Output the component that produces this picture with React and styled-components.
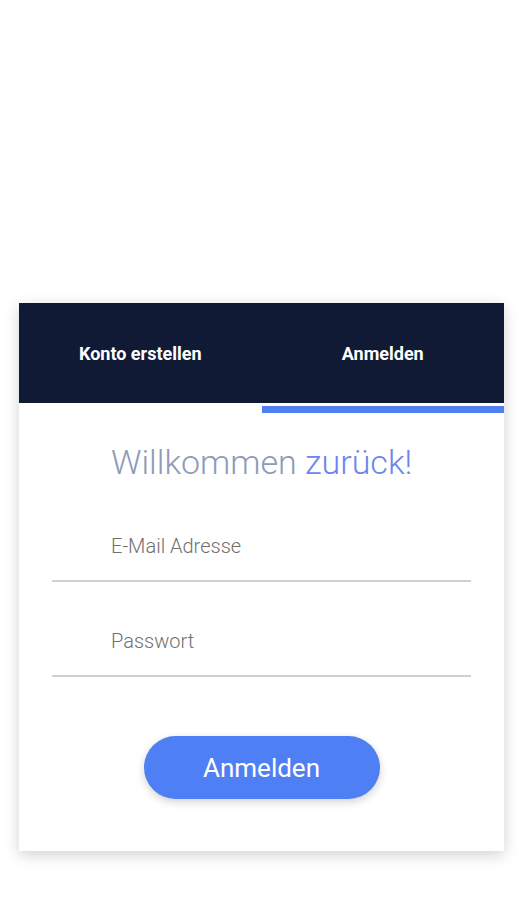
import styled, { createGlobalStyle } from "styled-components";

const GlobalStyle = createGlobalStyle`
  * { box-sizing: border-box; }
  body {
    margin: 0;
    background: #ffffff;
    font-family: Roboto, "Liberation Sans", sans-serif;
  }
`;

const Page = styled.div`
  width: 524px;
  height: 900px;
  padding: 303px 20px 0 19px;
`;

const Card = styled.section`
  width: 485px;
  height: 548px;
  background: #fff;
  box-shadow: 0 4px 14px rgba(0, 0, 0, 0.18);
  display: flex;
  flex-direction: column;
`;

const TabBar = styled.nav`
  height: 100px;
  background: #111a35;
  display: flex;
`;

const Tab = styled.button`
  flex: 1;
  background: none;
  border: none;
  color: #fff;
  font-family: Roboto, "Liberation Sans", sans-serif;
  font-size: 18px;
  font-weight: 700;
  cursor: pointer;
  padding: 0;
`;

const IndicatorTrack = styled.div`
  height: 10px;
  padding-top: 3px;
  display: flex;
  justify-content: flex-end;
`;

const Indicator = styled.div`
  width: 50%;
  height: 7px;
  background: #4f7ff0;
`;

const Form = styled.form`
  display: flex;
  flex-direction: column;
  padding: 29px 33px 0;
`;

const Title = styled.h1`
  margin: 0 0 0 59px;
  font-size: 34px;
  font-weight: 300;
  line-height: 40px;
  color: #8d9bb8;
`;

const Accent = styled.span`
  color: #6b86ef;
`;

const Field = styled.input`
  width: 100%;
  height: 57px;
  border: none;
  border-bottom: 2px solid #cfcfcf;
  padding: 0 0 13px 59px;
  font-family: Roboto, "Liberation Sans", sans-serif;
  font-size: 20px;
  font-weight: 300;
  color: #333;
  outline: none;
  background: transparent;
  margin-top: ${(p) => p.$gap}px;

  &::placeholder {
    color: #707070;
  }
`;

const Submit = styled.button`
  align-self: center;
  margin-top: 59px;
  width: 236px;
  height: 63px;
  border: none;
  border-radius: 32px;
  background: #4f7ff5;
  color: #fff;
  font-family: Roboto, "Liberation Sans", sans-serif;
  font-size: 26px;
  font-weight: 400;
  box-shadow: 0 3px 8px rgba(0, 0, 0, 0.18);
  cursor: pointer;
`;

export default function App() {
  return (
    <>
      <GlobalStyle />
      <Page>
        <Card>
          <TabBar>
            <Tab type="button">Konto erstellen</Tab>
            <Tab type="button">Anmelden</Tab>
          </TabBar>
          <IndicatorTrack>
            <Indicator />
          </IndicatorTrack>
          <Form onSubmit={(e) => e.preventDefault()}>
            <Title>
              Willkommen <Accent>zurück!</Accent>
            </Title>
            <Field $gap={43} type="email" placeholder="E-Mail Adresse" />
            <Field $gap={38} type="password" placeholder="Passwort" />
            <Submit type="submit">Anmelden</Submit>
          </Form>
        </Card>
      </Page>
    </>
  );
}
